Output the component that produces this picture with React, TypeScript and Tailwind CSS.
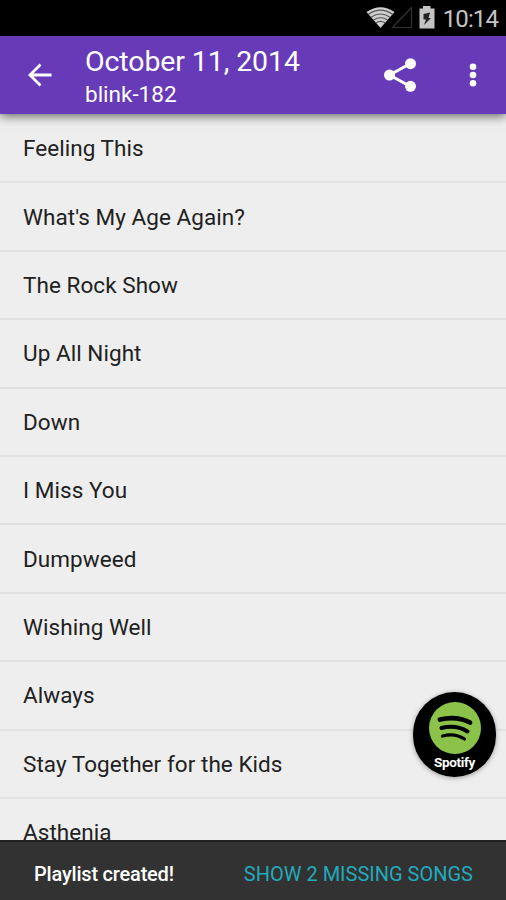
const SONGS = [
  "Feeling This",
  "What's My Age Again?",
  "The Rock Show",
  "Up All Night",
  "Down",
  "I Miss You",
  "Dumpweed",
  "Wishing Well",
  "Always",
  "Stay Together for the Kids",
  "Asthenia",
];

function StatusBar() {
  return (
    <div className="flex h-9 shrink-0 items-center justify-end bg-black pr-2 text-[#c4c4c4]">
      <svg width="74" height="36" viewBox="0 0 74 36" aria-hidden="true">
        {/* wifi fan, cut by thin dark arcs */}
        <path d="M5.5 12Q19.500 2.500 33.5 12L19.500 28Z" fill="#cfcfcf" />
        <g fill="none" stroke="#555" strokeWidth="1.2">
          <path d="M7.500 14.200Q19.500 6 31.500 14.200" />
          <path d="M10 17.200Q19.500 10.800 29 17.200" />
          <path d="M12.500 20Q19.500 15.500 26.500 20" />
          <path d="M15 22.800Q19.500 20 24 22.800" />
        </g>
        <path d="M31.5 27.5H50.5V7.500Z" fill="none" stroke="#333" strokeWidth="1.2" />
        <path d="M62 6H69.500V8.5H73.500V28.5H58.500V8.5H62Z" fill="#c4c4c4" />
        <path d="M69 12.500L62.500 14V19.500H65L63 25L70 18H67.500Z" fill="#222" />
      </svg>
      <span className="ml-2 pt-0.5 text-[24px] leading-9 tracking-[-0.9px]">10:14</span>
    </div>
  );
}

function AppBar() {
  return (
    <header className="relative z-10 flex h-[78px] shrink-0 items-center bg-[#673ab7] text-white shadow-[0_2px_10px_rgba(0,0,0,0.6)]">
      <button aria-label="Back" className="ml-[26px] h-6 w-7">
        <svg width="28" height="24" viewBox="0 0 28 24" fill="none" stroke="currentColor" strokeWidth="2.8">
          <path d="M25.5 12H4.5M14.5 1.5L4 12L14.5 22.5" />
        </svg>
      </button>
      <div className="ml-[31px] flex-1 pt-[5px]">
        <h1 className="text-[28.5px] leading-8 tracking-[-0.1px]">October 11, 2014</h1>
        <p className="text-[22.5px] leading-8">blink-182</p>
      </div>
      <button aria-label="Share" className="h-9 w-9">
        <svg width="36" height="36" viewBox="0 0 36 36" fill="currentColor">
          <path d="M28.5 6.5L7.5 18L28.5 29.5" fill="none" stroke="currentColor" strokeWidth="3" />
          <circle cx="28.5" cy="6.7" r="5.5" />
          <circle cx="7.5" cy="18" r="5.5" />
          <circle cx="28.5" cy="29.3" r="5.5" />
        </svg>
      </button>
      <button aria-label="More options" className="mr-[21px] ml-[43px] h-9 w-6">
        <svg width="24" height="36" viewBox="0 0 24 36" fill="currentColor">
          <circle cx="12" cy="9.7" r="3.3" />
          <circle cx="12" cy="18" r="3.3" />
          <circle cx="12" cy="26.3" r="3.3" />
        </svg>
      </button>
    </header>
  );
}

function SpotifyButton() {
  return (
    <button className="absolute right-2.5 bottom-[123px] flex h-[85px] w-[83px] flex-col items-center rounded-full bg-black pt-[9px] shadow-[0_1px_5px_rgba(0,0,0,0.35)]">
      <svg width="52" height="54" viewBox="0 0 52 54" aria-hidden="true">
        <circle cx="26" cy="27" r="26" fill="#8bc34a" />
        <g fill="none" stroke="#000" strokeLinecap="round">
          <path d="M11 18.500Q28 14.500 41 21.5" strokeWidth="4.800" />
          <path d="M12.5 27Q27 23.500 38.500 30.5" strokeWidth="4" />
          <path d="M13.500 35Q26 31.5 35.500 38" strokeWidth="3.2" />
        </g>
      </svg>
      <span className="text-[13.5px] leading-[14px] font-bold tracking-[-0.3px] text-white">Spotify</span>
    </button>
  );
}

function Snackbar() {
  return (
    <div className="flex h-[60px] shrink-0 items-center justify-between border-t-2 border-[#222] bg-[#323232] pt-1.5 pr-[33px] pl-[34px] text-[20px]">
      <span className="font-medium tracking-[-0.2px] text-white">Playlist created!</span>
      <button className="text-[#22aabc]">SHOW 2 MISSING SONGS</button>
    </div>
  );
}

export default function App() {
  return (
    <div className="relative flex h-[900px] w-[506px] flex-col overflow-hidden bg-[#eee] font-['Roboto',sans-serif]">
      <StatusBar />
      <AppBar />
      <ul className="min-h-0 flex-1 overflow-hidden pt-px text-[#212121]">
        {SONGS.map((song) => (
          <li
            key={song}
            className="flex h-[68.4px] items-center border-b-2 border-[#e1e1e1] pt-0.5 pl-[23px] text-[22.5px] tracking-[0.05px]"
          >
            {song}
          </li>
        ))}
      </ul>
      <Snackbar />
      <SpotifyButton />
    </div>
  );
}
